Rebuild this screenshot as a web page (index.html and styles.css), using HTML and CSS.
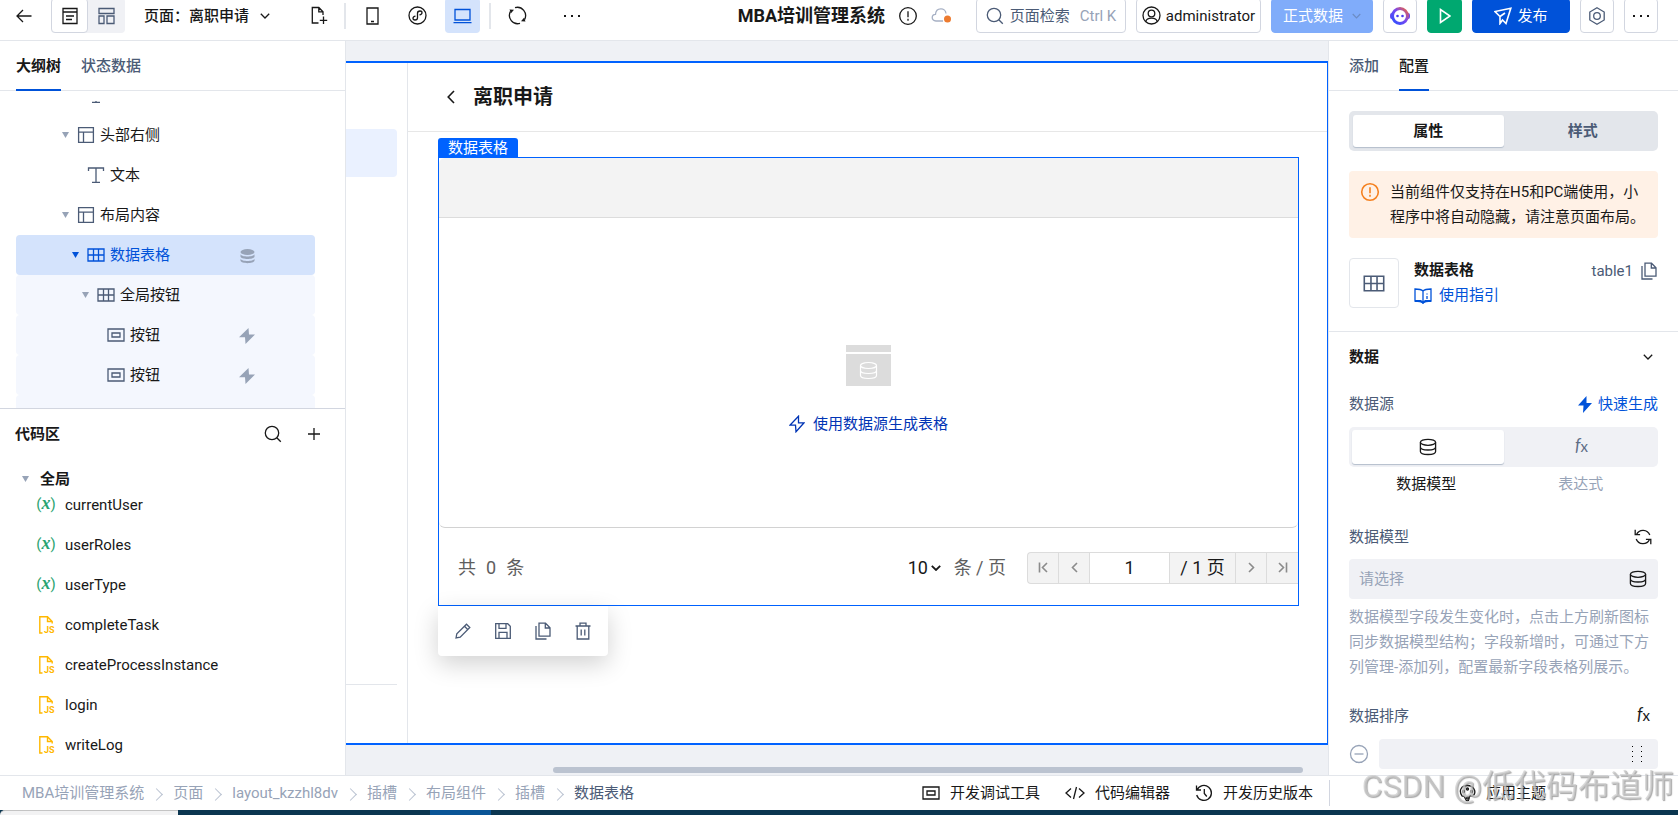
FILE: index.html
```html
<!DOCTYPE html>
<html lang="zh-CN">
<head>
<meta charset="utf-8">
<title>MBA培训管理系统</title>
<link rel="stylesheet" href="styles.css">
</head>
<body>
<svg class="sprite" aria-hidden="true">
  <symbol id="i-chev" viewBox="0 0 10 6"><path d="M.8.8 5 5 9.2.8"/></symbol>
  <symbol id="i-search" viewBox="0 0 18 18"><circle cx="8" cy="8" r="6.7"/><path d="m12.8 12.8 4 4"/></symbol>
  <symbol id="i-db" viewBox="0 0 18 18"><ellipse cx="9" cy="4.3" rx="7.6" ry="3"/><path d="M1.4 4.3v9.2c0 1.8 3.4 3 7.6 3s7.6-1.2 7.6-3V4.3M1.4 9c0 1.8 3.4 3 7.6 3s7.600-1.2 7.600-3"/></symbol>
  <symbol id="i-layout" viewBox="0 0 18 18"><path d="M1.600 1.600h14.800v14.800H1.600zM1.600 6.200h14.800M6.500 6.200v10.200"/></symbol>
  <symbol id="i-grid" viewBox="0 0 18 14"><path d="M1 1h16v12H1zM1 7h16M6.500 1v12M11.500 1v12"/></symbol>
  <symbol id="i-btn" viewBox="0 0 18 14"><path d="M1 1h16v12H1zM5 5h8v4H5z"/></symbol>
  <symbol id="i-text" viewBox="0 0 18 18"><path d="M1.500 5V2h15v3M9 2v14M5 16.300h8"/></symbol>
  <symbol id="i-bolt" viewBox="0 0 16 16"><path d="M9.500 0 0 9.200h6L6.500 16 16 6.500h-6z"/></symbol>
  <symbol id="i-copy" viewBox="0 0 18 18"><path d="M5 1.200h6.500L16 5.700v8.500H5zM11.300 1.500V6h4.500M2 4v13h10.500"/></symbol>
  <symbol id="i-warn" viewBox="0 0 20 20"><circle cx="10" cy="10" r="8.300"/><path d="M10 5.200v6M10 12.800v2"/></symbol>
  <symbol id="i-dots" viewBox="0 0 18 4"><path class="solid" d="M1 1h2v2H1zM8 1h2v2H8zM15 1h2v2h-2z"/></symbol>
  <symbol id="i-file" viewBox="0 0 18 20"><path d="M4.500 18H1.800V1.800h7.700l4.700 4.700v2M9.500 2v4.500H14"/></symbol>
</svg>

<div class="app">
  <header class="topbar">
    <div class="topbar-row">
      <button class="bare back" aria-label="返回"><svg class="icon" width="16" height="14" viewBox="0 0 16 14"><path d="M15.500 7H1M7 1 1 7l6 6"/></svg></button>
      <div class="view-switch">
        <button class="view on" aria-label="列表视图"><svg class="icon" width="16" height="18" viewBox="0 0 16 18"><path d="M1 1.500h14v15H1zM1 5h14M4 9h8M4 12.500h6"/></svg></button>
        <button class="view" aria-label="布局视图"><svg class="icon" width="17" height="18" viewBox="0 0 17 18"><path d="M1 1.500h15v5H1zM1 9h5v7.500H1zM9 9h7v7.500H9z"/></svg></button>
      </div>
      <button class="bare page-name">页面：离职申请<svg class="icon" width="10" height="6"><use href="#i-chev"/></svg></button>
      <button class="bare new-page" aria-label="新建页面"><svg class="icon" width="17" height="19" viewBox="0 0 17 19"><path d="M7.500 17H1.300V1.500h6.500L12 5.700V9M7.800 1.800v4H12M12.500 10.500V18M8.800 14.300h7.400"/></svg></button>
      <span class="rule"></span>
      <button class="bare phone" aria-label="手机"><svg class="icon" width="13" height="18" viewBox="0 0 13 18"><path d="M1 1h11v16H1zM5 14.500h3"/></svg></button>
      <button class="bare mini" aria-label="小程序"><svg class="icon" width="19" height="19" viewBox="0 0 19 19"><circle cx="9.500" cy="9.500" r="8.500"/><path d="M11.500 8.800c3.500-.5 3-3.800.5-3.800-1.500 0-2.500.8-2.500 2.200v4.600c0 1.400-1 2.200-2.500 2.200-2.500 0-3-3.300.5-3.800"/></svg></button>
      <button class="device on" aria-label="电脑"><svg class="icon" width="19" height="16" viewBox="0 0 19 16"><path d="M2 1.500h15v10.500H2zM.5 14.700h18"/></svg></button>
      <span class="rule"></span>
      <button class="bare reload" aria-label="刷新"><svg class="icon" width="19" height="19" viewBox="0 0 19 19"><path d="M7 1.600a8.300 8.300 0 0 1 9.500 12M12 17.400a8.300 8.300 0 0 1-9.500-12"/><path class="solid" d="M1.500 3.500l4.500.3-3 3.400zM17.500 15.500l-4.500-.3 3-3.400z"/></svg></button>
      <button class="bare more" aria-label="更多"><svg class="icon" width="18" height="4"><use href="#i-dots"/></svg></button>

      <div class="app-title">
        <h1>MBA培训管理系统</h1>
        <svg class="icon" width="20" height="20"><use href="#i-warn"/></svg>
        <svg class="icon cloud" width="21" height="17" viewBox="0 0 21 17"><path d="M12 14H5C-.2 13.500.3 7.500 4.500 7.300 5 .2 14.500.2 15 6.500"/><circle class="dot" cx="16.500" cy="12" r="3.500"/></svg>
      </div>

      <div class="actions">
        <button class="box search"><svg class="icon" width="18" height="18"><use href="#i-search"/></svg>页面检索<kbd>Ctrl K</kbd></button>
        <button class="box user"><svg class="icon" width="19" height="19" viewBox="0 0 19 19"><circle cx="9.500" cy="9.500" r="8.500"/><circle cx="9.500" cy="7.500" r="3.300"/><path d="M3.800 15.500c1-4.500 10.400-4.500 11.400 0"/></svg>administrator</button>
        <button class="box env">正式数据<svg class="icon" width="9" height="6"><use href="#i-chev"/></svg></button>
        <button class="box square" aria-label="AI 助手"><svg width="20" height="20" viewBox="0 0 20 20"><defs><linearGradient id="ai" x1="1" y1="0" x2="0" y2="1"><stop offset="0" stop-color="#f0643c"/><stop offset=".45" stop-color="#7a48f0"/><stop offset="1" stop-color="#2a50ff"/></linearGradient></defs><rect y="7" width="20" height="6" rx="2" fill="#6a4cf0"/><circle cx="10" cy="10" r="7.500" fill="#fff" stroke="url(#ai)" stroke-width="3"/><circle cx="7.500" cy="10" r="1.300" fill="#4a3cf0"/><circle cx="12.500" cy="10" r="1.300" fill="#4a3cf0"/></svg></button>
        <button class="box square play" aria-label="预览"><svg class="icon" width="12" height="16" viewBox="0 0 12 16"><path d="M1.500 1.500v13L11 8z"/></svg></button>
        <button class="box publish"><svg class="icon" width="18" height="18" viewBox="0 0 18 18"><path d="M16.800 1.200 1 4.500l5 5v7l2.500-3.500 3.500 3.500zM6 9.500l5-3.500"/></svg>发布</button>
        <button class="box square" aria-label="设置"><svg class="icon slate" width="18" height="18" viewBox="0 0 18 18"><path d="M9 .8 16.200 5v8L9 17.200 1.800 13V5z"/><circle cx="9" cy="9" r="3.300"/></svg></button>
        <button class="box square" aria-label="更多操作"><svg class="icon" width="18" height="4"><use href="#i-dots"/></svg></button>
      </div>
    </div>
  </header>

  <div class="workspace">
    <aside class="left">
      <nav class="tabs">
        <button class="tab on">大纲树</button>
        <button class="tab">状态数据</button>
      </nav>
      <div class="outline">
        <ul class="tree">
          <li class="node d3"><svg class="icon" width="18" height="18"><use href="#i-text"/></svg></li>
          <li class="node d2"><i class="caret"></i><svg class="icon" width="18" height="18"><use href="#i-layout"/></svg>头部右侧</li>
          <li class="node d3"><svg class="icon" width="18" height="18"><use href="#i-text"/></svg>文本</li>
          <li class="node d2"><i class="caret"></i><svg class="icon" width="18" height="18"><use href="#i-layout"/></svg>布局内容</li>
          <li class="node d3 parent current"><i class="caret"></i><svg class="icon" width="18" height="14"><use href="#i-grid"/></svg>数据表格
            <svg class="mark" width="15" height="15" viewBox="0 0 15 15"><ellipse cx="7.500" cy="3" rx="7" ry="3"/><path d="M.5 5.200c1 3 13 3 14 0v2.500c-1 3-13 3-14 0zM.5 9.800c1 3 13 3 14 0v2c-1 3.200-13 3.200-14 0z"/></svg></li>
          <li class="node d4 parent child"><i class="caret"></i><svg class="icon" width="18" height="14"><use href="#i-grid"/></svg>全局按钮</li>
          <li class="node d5 child"><svg class="icon" width="18" height="14"><use href="#i-btn"/></svg>按钮<svg class="mark" width="16" height="16"><use href="#i-bolt"/></svg></li>
          <li class="node d5 child"><svg class="icon" width="18" height="14"><use href="#i-btn"/></svg>按钮<svg class="mark" width="16" height="16"><use href="#i-bolt"/></svg></li>
          <li class="node d5 child"></li>
        </ul>
      </div>
      <section class="code">
        <div class="code-head">
          <h2>代码区</h2>
          <button class="bare" aria-label="搜索"><svg class="icon" width="18" height="18"><use href="#i-search"/></svg></button>
          <button class="bare" aria-label="新增"><svg class="icon" width="12" height="12" viewBox="0 0 12 12"><path d="M6 0v12M0 6h12"/></svg></button>
        </div>
        <div class="group"><i class="caret"></i>全局</div>
        <ul class="files">
          <li><svg class="var" width="20" height="18" viewBox="0 0 20 18"><text x="10" y="13" text-anchor="middle">(<tspan class="var-x">x</tspan>)</text></svg>currentUser</li>
          <li><svg class="var" width="20" height="18" viewBox="0 0 20 18"><text x="10" y="13" text-anchor="middle">(<tspan class="var-x">x</tspan>)</text></svg>userRoles</li>
          <li><svg class="var" width="20" height="18" viewBox="0 0 20 18"><text x="10" y="13" text-anchor="middle">(<tspan class="var-x">x</tspan>)</text></svg>userType</li>
          <li><svg class="js" width="18" height="20" viewBox="0 0 18 20"><use href="#i-file"/><text x="6" y="18">JS</text></svg>completeTask</li>
          <li><svg class="js" width="18" height="20" viewBox="0 0 18 20"><use href="#i-file"/><text x="6" y="18">JS</text></svg>createProcessInstance</li>
          <li><svg class="js" width="18" height="20" viewBox="0 0 18 20"><use href="#i-file"/><text x="6" y="18">JS</text></svg>login</li>
          <li><svg class="js" width="18" height="20" viewBox="0 0 18 20"><use href="#i-file"/><text x="6" y="18">JS</text></svg>writeLog</li>
        </ul>
      </section>
    </aside>

    <main class="canvas">
      <div class="frame">
        <div class="nav-stub"><div class="nav-item"></div><div class="nav-line"></div></div>
        <div class="page">
          <div class="page-head">
            <svg class="icon" width="8" height="14" viewBox="0 0 8 14"><path d="M7 1 1.200 7 7 13"/></svg>
            <h2>离职申请</h2>
          </div>
          <div class="widget">
            <span class="widget-tag">数据表格</span>
            <div class="grid-head"></div>
            <div class="grid-empty">
              <svg width="45" height="41" viewBox="0 0 45 41"><path fill="#dcdcdc" d="M0 0h45v7H0zM0 9h45v32H0z"/><g fill="none" stroke="#fff" stroke-width="1.200"><ellipse cx="22.500" cy="20.500" rx="8" ry="3"/><path d="M14.500 20.500v10c0 1.700 3.600 3 8 3s8-1.300 8-3v-10M14.500 25.500c0 1.700 3.600 3 8 3s8-1.300 8-3"/></g></svg>
              <a href="#" class="gen"><svg class="icon" width="16" height="18" viewBox="0 0 16 18"><path d="M9.500 1.200.9 10.200h5.600L7 16.800l8.100-9H9.500z"/></svg>使用数据源生成表格</a>
            </div>
            <div class="grid-foot">
              <span class="total"><span>共</span><span>0</span><span>条</span></span>
              <label class="size"><span class="size-pick"><select aria-label="每页条数"><option>10</option></select><svg class="icon" width="10" height="6"><use href="#i-chev"/></svg></span>条 / 页</label>
              <div class="pager">
                <button aria-label="首页"><svg class="icon" width="10" height="11" viewBox="0 0 10 11"><path d="M1.500.5v10M9 1 4.500 5.500 9 10"/></svg></button>
                <button aria-label="上一页"><svg class="icon" width="7" height="11" viewBox="0 0 7 11"><path d="M6 1 1.500 5.500 6 10"/></svg></button>
                <input type="text" value="1" aria-label="页码">
                <span class="pages">/ 1 页</span>
                <button aria-label="下一页"><svg class="icon" width="7" height="11" viewBox="0 0 7 11"><path d="M1 1l4.500 4.500L1 10"/></svg></button>
                <button aria-label="末页"><svg class="icon" width="10" height="11" viewBox="0 0 10 11"><path d="M8.500.5v10M1 1l4.500 4.500L1 10"/></svg></button>
              </div>
            </div>
            <div class="float-tools">
              <button class="bare" aria-label="编辑"><svg class="icon" width="18" height="18" viewBox="0 0 18 18"><path d="m2 16 .8-4.200L12.500 2.200l3.300 3.300L6.200 15.200zM10.500 4.300l3.200 3.200"/></svg></button>
              <button class="bare" aria-label="保存"><svg class="icon" width="18" height="18" viewBox="0 0 18 18"><path d="M1.700 1.700h12l2.600 2.600v12H1.700zM5 1.700v4.600h7V1.700M5 16.300v-6h8v6"/></svg></button>
              <button class="bare" aria-label="复制"><svg class="icon" width="18" height="18"><use href="#i-copy"/></svg></button>
              <button class="bare" aria-label="删除"><svg class="icon" width="18" height="18" viewBox="0 0 18 18"><path d="M1.500 4h15M3.200 4v13h11.600V4M6 4V1.200h6V4M7.200 7.500v6M10.800 7.500v6"/></svg></button>
            </div>
          </div>
        </div>
      </div>
      <div class="scrollbar"></div>
    </main>

    <aside class="right">
      <nav class="tabs">
        <button class="tab">添加</button>
        <button class="tab on">配置</button>
      </nav>
      <div class="intro">
        <div class="segment strong"><button class="on">属性</button><button>样式</button></div>
        <div class="alert"><svg class="icon" width="20" height="20"><use href="#i-warn"/></svg><p>当前组件仅支持在H5和PC端使用，小程序中将自动隐藏，请注意页面布局。</p></div>
        <div class="component">
          <span class="thumb"><svg class="icon" width="22" height="17" viewBox="0 0 18 14"><use href="#i-grid"/></svg></span>
          <div class="info">
            <h3>数据表格</h3>
            <a href="#"><svg class="icon" width="18" height="16" viewBox="0 0 18 16"><path d="M9 3C7 1 4 1 1 1v12c3 0 6 0 8 2 2-2 5-2 8-2V1c-3 0-6 0-8 2zM9 3v12M13 5.500v1M13 8v3"/><path class="solid" d="M1 12h6l2 1.500 2-1.500h6v2h-6l-2 2-2-2H1z"/></svg>使用指引</a>
          </div>
          <span class="cid">table1<svg class="icon" width="18" height="18"><use href="#i-copy"/></svg></span>
        </div>
      </div>
      <section class="config">
        <h3 class="config-title">数据<svg class="icon" width="10" height="6"><use href="#i-chev"/></svg></h3>
        <div class="field-label">数据源<a href="#"><svg class="bolt" width="14" height="17" viewBox="0 0 14 17"><path d="M8.500 0 0 9.500h5.500L5 17l9-10H8.500z"/></svg>快速生成</a></div>
        <div class="segment soft">
          <button class="on" aria-label="数据模型"><svg class="icon" width="18" height="18"><use href="#i-db"/></svg></button>
          <button aria-label="表达式"><svg class="fx" width="16" height="20" viewBox="0 0 16 20"><text x="1" y="14">f<tspan class="fx-x" dy="1">x</tspan></text></svg></button>
        </div>
        <div class="captions"><span class="on">数据模型</span><span>表达式</span></div>
        <div class="field-label"><label for="model">数据模型</label><button class="bare" aria-label="刷新模型"><svg class="icon" width="18" height="18" viewBox="0 0 18 18"><path d="M2.500 6.500A7.200 7.200 0 0 1 15.800 7M15.500 11.500A7.200 7.200 0 0 1 2.200 11M1.200 1.800v4.900h4.900M16.800 16.200v-4.900h-4.900"/></svg></button></div>
        <div class="picker"><input id="model" type="text" placeholder="请选择"><svg class="icon" width="18" height="18"><use href="#i-db"/></svg></div>
        <p class="help">数据模型字段发生变化时，点击上方刷新图标同步数据模型结构；字段新增时，可通过下方列管理-添加列，配置最新字段表格列展示。</p>
        <div class="field-label">数据排序<button class="bare" aria-label="绑定表达式"><svg class="fx dark" width="16" height="20" viewBox="0 0 16 20"><text x="1" y="14">f<tspan class="fx-x" dy="1">x</tspan></text></svg></button></div>
        <div class="sort"><button class="bare" aria-label="移除"><svg class="icon" width="20" height="20" viewBox="0 0 20 20"><circle cx="10" cy="10" r="8.500"/><path d="M5.500 10h9"/></svg></button>
          <div class="sort-box"><svg width="12" height="18" viewBox="0 0 12 18"><path d="M1 1h1v1H1zM10 1h1v1h-1zM1 6h1v1H1zM10 6h1v1h-1zM1 11h1v1H1zM10 11h1v1h-1zM1 16h1v1H1zM10 16h1v1h-1z"/></svg></div></div>
      </section>
    </aside>
  </div>

  <footer class="status">
    <nav class="crumbs">
      <a href="#">MBA培训管理系统</a><a href="#">页面</a><a href="#">layout_kzzhl8dv</a><a href="#">插槽</a><a href="#">布局组件</a><a href="#">插槽</a><a href="#" class="here">数据表格</a>
    </nav>
    <div class="tools">
      <button class="bare"><svg class="icon" width="18" height="14"><use href="#i-btn"/></svg>开发调试工具</button>
      <button class="bare"><svg class="icon" width="20" height="14" viewBox="0 0 20 14"><path d="M6 2.500 1 7l5 4.500M14 2.500 19 7l-5 4.500M11.500 1l-3 12"/></svg>代码编辑器</button>
      <button class="bare"><svg class="icon" width="18" height="18" viewBox="0 0 18 18"><path d="M2 6a7.500 7.500 0 1 1-.3 5M1.500 1.500V6H6M9.300 5v4.500l2.500 3"/></svg>开发历史版本</button>
    </div>
    <div class="theme"><button class="bare"><svg class="icon" width="17" height="18" viewBox="0 0 17 18"><path d="M3 12C-1 6 3 1.500 8.500 1.500S18 7 14.500 11.500c-1 1-2.500 0-3.500.5-1.500 1 0 4.500-2.500 4.800C6 17 6.500 13 5 12.300c-.7-.4-1.300 0-2-.3z"/><circle cx="4.500" cy="7.500" r="1"/><circle cx="8.500" cy="5" r="1"/><circle cx="12.500" cy="7.500" r="1"/><circle cx="8.500" cy="14" r="1"/></svg>应用主题</button></div>
  </footer>
  <div class="taskbar"><div class="task-light"></div><div class="task-active"></div></div>
  <div class="watermark">CSDN @低代码布道师</div>
</div>
</body>
</html>
```

FILE: styles.css
```css
* { box-sizing: border-box; }
html, body { height: 100%; }
body {
  margin: 0;
  font: 15px/20px Roboto, "Noto Sans CJK SC", sans-serif;
  color: #181818;
  background: #fff;
  overflow: hidden;
}
h1, h2, h3, p, ul { margin: 0; padding: 0; }
ul { list-style: none; }
a { color: #0052d9; text-decoration: none; }
button, input, select { font: inherit; color: inherit; padding: 0; margin: 0; border: 0; background: none; outline: none; }
.sprite { position: absolute; width: 0; height: 0; }
svg { flex: none; display: block; }
.icon { fill: none; stroke: currentColor; stroke-width: 1.3; }
.solid { fill: currentColor; stroke: none; }
.bare { display: flex; align-items: center; }

.app { height: 100vh; display: grid; grid-template-rows: 41px minmax(0, 1fr) 35px 5px; }

/* top bar */
.topbar { border-bottom: 1px solid #e3e6eb; overflow: hidden; }
.topbar-row { display: flex; align-items: center; height: 35px; margin-top: -2px; padding: 0 20px 0 16px; }
.view-switch { display: flex; margin-left: 19px; background: #f0f1f5; border-radius: 4px; }
.view { width: 37px; height: 35px; display: grid; place-items: center; color: #4b5b76; }
.view.on { color: #181818; background: #fff; border: 1px solid #d2d6e0; border-radius: 4px; }
.page-name { gap: 11px; margin-left: 19px; font-weight: 500; white-space: nowrap; }
.new-page { margin-left: 41px; }
.rule { width: 2px; height: 26px; margin-left: 16px; background: #e3e6eb; }
.phone { margin-left: 20px; }
.mini { margin-left: 29px; }
.device { width: 35px; height: 35px; margin-left: 18px; display: grid; place-items: center; }
.device.on { background: #d4e3fc; color: #0052d9; border-radius: 4px; }
.device + .rule { margin-left: 9px; }
.reload { margin-left: 17px; }
.more { margin-left: 36px; }
.app-title { display: flex; align-items: center; gap: 13px; margin-left: auto; }
.app-title h1 { font-size: 18px; font-weight: 700; white-space: nowrap; }
.cloud { color: #a6b0c4; }
.dot { fill: #ed7b2f; stroke: none; }
.actions { display: flex; gap: 10px; margin-left: 24px; }
.box { height: 35px; display: flex; align-items: center; justify-content: center; border: 1px solid #d2d6e0; border-radius: 4px; white-space: nowrap; }
.square { width: 34px; }
.slate { color: #4b5b76; }
.search { width: 150px; gap: 6px; color: #4b5b76; }
.search kbd { font: inherit; color: #97a3b7; margin-left: 4px; }
.user { width: 125px; gap: 5px; }
.env { width: 102px; gap: 9px; color: #fff; background: #80acfa; border-color: #80acfa; }
.env .icon { color: #6b8cc4; }
.play { width: 35px; color: #fff; background: #00a870; border-color: #00a870; }
.publish { width: 98px; gap: 5px; color: #fff; background: #0052d9; border-color: #0052d9; }
.play .icon, .publish .icon { stroke-width: 1.6; }

/* columns */
.workspace { display: grid; grid-template-columns: 346px minmax(0, 1fr) 350px; min-height: 0; }
.tabs { flex: none; display: flex; gap: 20px; height: 50px; padding: 0 20px; border-bottom: 1px solid #e3e6eb; }
.tab { height: 50px; padding-top: 2px; color: #4b5b76; font-weight: 500; border-bottom: 2px solid transparent; }
.tab.on { color: #181818; border-color: #0052d9; }

/* left */
.left { display: flex; flex-direction: column; min-height: 0; border-right: 1px solid #e3e6eb; }
.left .tabs { padding: 0 16px; }
.left .tab.on { font-weight: 700; }
.outline { flex: 1; min-height: 0; overflow: hidden; margin-top: 10px; }
.tree { margin: -26px 30px 0 16px; }
.node { display: flex; align-items: center; gap: 5px; height: 40px; border-radius: 4px; }
.node .icon { color: #4b5b76; }
.caret { width: 7px; height: 6px; background: #97a3b7; clip-path: polygon(0 0, 100% 0, 50% 100%); }
.node .caret { margin-right: 3px; }
.d2 { padding-left: 46px; }
.d3 { padding-left: 71px; }
.d3.parent { padding-left: 56px; }
.d4.parent { padding-left: 66px; }
.d5 { padding-left: 91px; }
.child { background: #f4f7fe; }
.current, .current .icon { color: #0052d9; }
.current { background: #d4e3fc; }
.current .caret { background: #0052d9; }
.mark { margin: 2px 60px 0 auto; fill: #97a3b7; }
.code { flex: none; border-top: 1px solid #d2d6e0; padding: 0 25px 10px 15px; }
.code-head { display: flex; align-items: center; gap: 26px; height: 50px; }
.code h2 { flex: 1; font-size: 15px; }
.group { display: flex; align-items: center; gap: 11px; padding: 14px 0 0 7px; line-height: 12px; font-weight: 700; }
.files li { display: flex; align-items: center; height: 40px; }
.var { margin: 0 9px 0 21px; }
.js { margin: 0 9px 0 23px; fill: none; stroke: #ffb800; stroke-width: 1.4; }
.js text { font: 700 9px Roboto, sans-serif; fill: #ffb800; stroke: none; }
.var text { font: 15px Roboto, sans-serif; fill: #2ba471; }
.var .var-x { font: italic 700 18px "Liberation Serif", serif; }

/* canvas */
.canvas { display: flex; flex-direction: column; min-height: 0; padding-top: 20px; background: #eff1f5; }
.frame { flex: 1; min-height: 0; display: flex; background: #fff; border: solid #0062ff; border-width: 2px 1px 2px 0; }
.nav-stub { flex: none; width: 62px; display: flex; flex-direction: column; padding: 66px 10px 58px 0; border-right: 1px solid #e3e6eb; }
.nav-item { height: 48px; background: #eaf1ff; border-radius: 0 4px 4px 0; }
.nav-line { height: 1px; margin-top: auto; background: #e3e6eb; }
.page { flex: 1; min-width: 0; }
.page-head { display: flex; align-items: center; gap: 18px; height: 69px; padding: 0 39px; border-bottom: 1px solid #e7e7e7; }
.page-head h2 { font-size: 20px; line-height: 28px; }
.page-head .icon { stroke-width: 1.6; }
.widget { position: relative; margin: 25px 28px 0 30px; border: 1px solid #0062ff; }
.widget-tag { position: absolute; left: -1px; bottom: 100%; height: 20px; padding: 0 10px; color: #fff; background: #0062ff; border-radius: 3px 3px 0 0; }
.grid-head { height: 60px; background: #f3f3f3; border-bottom: 1px solid #dcdcdc; border-radius: 6px 0 0 0; }
.grid-empty { height: 310px; display: flex; flex-direction: column; align-items: center; gap: 28px; padding-top: 127px; border-bottom: 1px solid #d2d2d2; border-radius: 0 0 6px 6px; }
.gen { display: flex; align-items: center; gap: 8px; color: #0034b5; }
.grid-foot { display: flex; align-items: center; height: 77px; padding: 2px 0 0 19px; font-size: 18px; color: #5e5e5e; }
.total { display: flex; gap: 10px; }
.size { display: flex; align-items: center; gap: 13px; margin-left: auto; }
.size-pick { display: flex; align-items: center; gap: 3px; color: #181818; }
.size select { appearance: none; width: 20px; }
.size .icon { stroke-width: 1.8; }
.pager { display: flex; height: 32px; margin-left: 21px; background: #f3f3f3; border: 1px solid #dcdcdc; border-radius: 4px 0 0 4px; border-right: 0; color: #181818; }
.pager > * { border-right: 1px solid #dcdcdc; }
.pager > :last-child { border-right: 0; }
.pager button { width: 31px; display: grid; place-items: center; color: #8b8b8b; }
.pager .icon { stroke-width: 1.6; }
.pager input { width: 80px; text-align: center; background: #fff; }
.pages { width: 66px; line-height: 30px; text-align: center; }
.float-tools { position: absolute; left: -1px; top: 100%; display: flex; gap: 22px; padding: 16px; margin-top: 1px; color: #4b5b76; background: #fff; border-radius: 0 0 4px 4px; box-shadow: 0 8px 24px rgba(0, 0, 0, .18); }
.scrollbar { flex: none; height: 6px; margin: 22px 25px 2px 207px; border-radius: 3px; background: #bbc3d0; }

/* right */
.right { border-left: 1px solid #e3e6eb; overflow: hidden; min-height: 0; }
.intro { display: flex; flex-direction: column; gap: 20px; padding: 20px 20px 23px; border-bottom: 1px solid #e3e6eb; }
.segment { display: flex; height: 40px; border-radius: 5px; }
.segment button { flex: 1; display: grid; place-items: center; }
.segment .on { margin: 4px; background: #fff; border-radius: 3px; box-shadow: 0 1px 1px #b3bdcb; }
.strong { background: #e3e6eb; font-weight: 700; color: #4b5b76; }
.strong .on { color: #181818; }
.soft { background: #f0f1f5; }
.soft .on { margin: 3px; }
.alert { display: flex; gap: 10px; padding: 9px 8px 8px 11px; line-height: 25px; background: #fff1e6; border-radius: 4px; }
.alert .icon { margin-top: 2px; color: #f5801f; stroke-width: 1.6; }
.component { display: flex; }
.thumb { width: 50px; height: 50px; display: grid; place-items: center; color: #4b5b76; border: 1px solid #e3e6eb; border-radius: 4px; }
.info { flex: 1; margin-left: 15px; line-height: 25px; }
.info h3 { font-size: 15px; }
.info a { display: flex; align-items: center; gap: 7px; }
.cid { display: flex; align-items: center; gap: 7px; height: 26px; color: #4b5b76; }
.config { padding: 0 20px; }
.config-title { display: flex; align-items: center; justify-content: space-between; height: 49px; padding-right: 5px; font-size: 15px; }
.config-title + .field-label { margin: 9px 0; }
.field-label { display: flex; align-items: center; justify-content: space-between; height: 28px; margin: 22px 0 8px; color: #4b5b76; }
.field-label a { display: flex; align-items: center; gap: 6px; }
.field-label .bare { margin-right: 6px; color: #181818; }
.bolt { fill: #0052d9; }
.fx { fill: #5e6d86; }
.fx.dark { fill: #181818; }
.fx text { font: italic 17px Lato, sans-serif; }
.fx .fx-x { font: 15px Lato, sans-serif; }
.captions { display: flex; line-height: 34px; text-align: center; color: #97a3b7; }
.captions span { flex: 1; }
.captions .on { color: #181818; }
.picker { display: flex; align-items: center; height: 40px; padding: 0 11px 0 10px; background: #f0f1f5; border-radius: 4px; }
.picker input { flex: 1; min-width: 0; }
.picker input::placeholder { color: #97a3b7; opacity: 1; }
.help { margin-top: 6px; line-height: 25px; color: #97a3b7; }
.sort { display: flex; gap: 10px; margin-top: 9px; }
.sort .bare { color: #97a3b7; }
.sort-box { flex: 1; height: 30px; display: flex; align-items: center; justify-content: flex-end; padding-right: 15px; background: #f0f1f5; border-radius: 4px; }

/* bottom */
.status { display: grid; grid-template-columns: minmax(0, 1fr) auto 349px; align-items: center; border-top: 1px solid #e3e6eb; background: #fff; white-space: nowrap; }
.crumbs { display: flex; padding-left: 22px; }
.crumbs a { display: flex; align-items: center; color: #97a3b7; }
.crumbs a + a::before { content: ""; width: 8px; height: 8px; margin: 2px 12px 0 8px; border: solid #b9c2d1; border-width: 1px 1px 0 0; transform: rotate(45deg); }
.crumbs .here { color: #4b5b76; }
.tools { display: flex; gap: 25px; padding-right: 16px; }
.status .bare { gap: 10px; }
.theme { display: flex; justify-content: center; height: 26px; padding-right: 3px; border-left: 1px solid #d2d6e0; }
.taskbar { display: flex; background: #0b3650; }
.task-light { width: 178px; background: #f2f2f3; border-top: 1px solid #c4c4c4; border-radius: 6px 0 0 0; }
.task-active { width: 61px; margin-left: 252px; background: #0a5596; }
.watermark { position: fixed; right: 4px; bottom: 9px; font-size: 32px; line-height: 40px; color: rgba(205, 205, 205, .7); text-shadow: 1px 1px 1px rgba(110, 110, 110, .6); pointer-events: none; white-space: nowrap; }
```
